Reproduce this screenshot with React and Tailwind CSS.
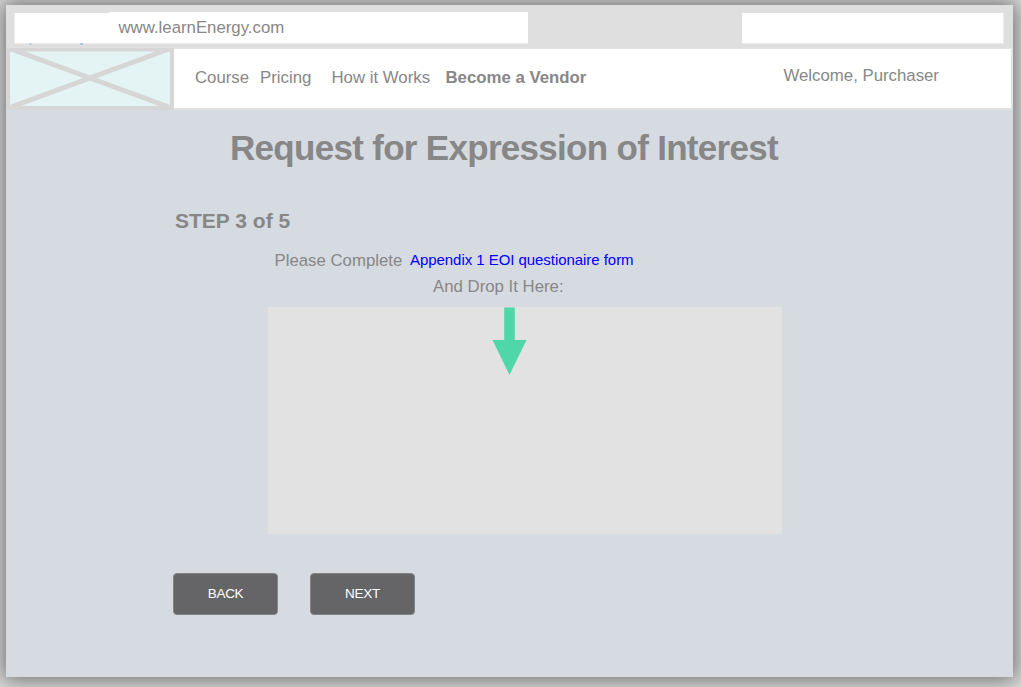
function Placeholder() {
  return (
    <div className="h-[62px] w-[168px] shrink-0 bg-[#d6d6d6] pl-1 pr-1 pt-[3px]">
      <svg className="block h-[55px] w-[160px]" viewBox="0 0 160 55" preserveAspectRatio="none" aria-hidden="true">
        <rect y="0.5" width="160" height="54.5" fill="#e4f3f4" />
        <path d="M1 -2 L159 56 M159 -2 L1 56" stroke="#d6d6d6" strokeWidth="5" />
      </svg>
    </div>
  );
}

function Header() {
  return (
    <header>
      <div className="flex h-[43px] items-start justify-between bg-[#dfdfdf] pl-2 pr-[9px]">
        <div className="flex pt-[7px]">
          <div className="mt-px h-[31px] w-[95px] border-b border-l border-[#ececec] bg-white">
            <svg className="block h-[33px] w-[94px]" overflow="visible" viewBox="0 0 94 33" aria-hidden="true">
              <path d="M15.5 30V32M65 31H68" stroke="#a9cbe0" strokeWidth="2" />
            </svg>
          </div>
          <div className="flex h-8 w-[419px] items-center border-b border-[#ececec] bg-white pl-[9.5px] pt-[1.5px] text-[16.8px] leading-none">
            www.learnEnergy.com
          </div>
        </div>
        <div className="mt-2 h-[31px] w-[262px] border-b border-r border-[#ececec] bg-white" />
      </div>
      <div className="flex h-[62px]">
        <Placeholder />
        <nav className="flex flex-1 border-b-2 border-r-2 border-t border-[#e2e2e2] bg-white pl-[21px] pt-[19px] text-[16.8px] leading-5">
          <span className="w-[65px]">Course</span>
          <span className="w-[71.5px]">Pricing</span>
          <span className="w-[114px]">How it Works</span>
          <span className="w-[338px] font-bold">Become a Vendor</span>
          <span className="-mt-0.5">Welcome, Purchaser</span>
        </nav>
      </div>
    </header>
  );
}

function Arrow() {
  return (
    <svg className="ml-[224px] block h-[68px] w-[35px]" viewBox="0 0 35 68" aria-hidden="true">
      <path d="M12.2 0.5H22.8V33H34.5L17.5 68L0.5 33H12.2Z" fill="#4fd6a9" />
    </svg>
  );
}

function Button({ children }) {
  return (
    <button className="h-[42px] w-[105px] rounded-[4px] border border-[#828385] bg-[#656567] text-[13.5px] leading-none tracking-[-0.3px] text-white">
      {children}
    </button>
  );
}

export default function App() {
  return (
    <div className="h-[687px] w-[1021px] overflow-hidden bg-[#dcdcdc] pl-1.5 pt-[5px] font-['Liberation_Sans',Arial,sans-serif] text-[#878787]">
      <div className="h-[672px] w-[1007px] bg-[#d6dae1] shadow-[0_0_20px_3px_rgba(0,0,0,0.5)]">
        <Header />
        <main className="pl-[167px]">
          <h1 className="ml-[57px] pt-[18px] text-[35px] font-bold leading-10 tracking-[-0.7px] whitespace-nowrap">
            Request for Expression of Interest
          </h1>
          <h2 className="ml-[2px] mt-[41px] text-[21px] font-bold leading-6">STEP 3 of 5</h2>
          <p className="ml-[101.5px] mt-[18px] flex h-5 text-[16.8px] leading-5">
            <span className="w-[135.5px]">Please Complete</span>
            <a className="-mt-px text-[15px] tracking-[-0.05px] text-[#0000ff]">
              Appendix 1 EOI questionaire form
            </a>
          </p>
          <p className="ml-[260px] mt-[6px] text-[16.8px] leading-5">And Drop It Here:</p>
          <div className="ml-[95px] mt-[10px] h-[227px] w-[514px] bg-[#e2e2e2]">
            <Arrow />
          </div>
          <div className="mt-[39px] flex gap-8">
            <Button>BACK</Button>
            <Button>NEXT</Button>
          </div>
        </main>
      </div>
    </div>
  );
}
